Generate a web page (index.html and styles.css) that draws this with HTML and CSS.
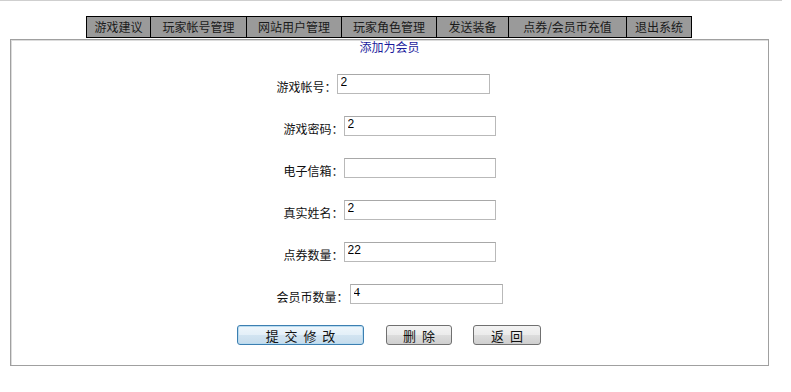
FILE: index.html
```html
<!DOCTYPE html>
<html lang="zh-CN">
<head>
    <meta charset="UTF-8">
    <title>添加为会员</title>
    <link rel="stylesheet" href="styles.css">
</head>
<body>
  <div class="topline"></div>

  <div id="menu">
    <a class="menu-item w1">游戏建议</a>
    <a class="menu-item w2">玩家帐号管理</a>
    <a class="menu-item w3">网站用户管理</a>
    <a class="menu-item w3">玩家角色管理</a>
    <a class="menu-item w4">发送装备</a>
    <a class="menu-item w5">点券/会员币充值</a>
    <a class="menu-item w6">退出系统</a>
  </div>

  <div id="main-box">
    <div class="title">添加为会员</div>

    <form id="member-form">
        <div class="form-row first">
            <label for="account">游戏帐号：</label>
            <input type="text" id="account" value="2">
        </div>
        <div class="form-row">
            <label for="password">游戏密码：</label>
            <input type="text" id="password" value="2">
        </div>
        <div class="form-row">
            <label for="email">电子信箱：</label>
            <input type="text" id="email" value="">
        </div>
        <div class="form-row">
            <label for="realname">真实姓名：</label>
            <input type="text" id="realname" value="2">
        </div>
        <div class="form-row">
            <label for="points">点券数量：</label>
            <input type="text" id="points" value="22">
        </div>
        <div class="form-row">
            <label for="coins">会员币数量：</label>
            <input type="text" id="coins" class="wide serif" value="4">
        </div>

        <div class="btn-row">
            <button type="submit" class="btn btn-main">提 交 修 改</button>
            <button type="button" class="btn btn-del">删 除</button>
            <button type="button" class="btn btn-back">返 回</button>
        </div>
    </form>
  </div>
</body>
</html>
```

FILE: styles.css
```css
body {
  margin: 0;
  padding: 0;
  background-color: #fff;
  font-family: "Liberation Sans", "Noto Sans CJK SC", sans-serif;
  font-size: 12px;
  color: #111;
}

.topline {
  width: 782px;
  height: 1px;
  background-color: #cfcfcf;
}

/* top menu */
#menu {
  display: flex;
  margin: 15px 0 0 86px;
  width: max-content;
  border: 1px solid #000;
  background-color: #9a9a9a;
}

.menu-item {
  display: block;
  height: 20px;
  line-height: 20px;
  text-align: center;
  font-size: 12px;
  color: #1a1a1a;
  font-family: "Noto Sans CJK SC", sans-serif;
  border-left: 1px solid #000;
}

.menu-item:first-child {
  border-left: none;
}

.w1 { width: 63px; }
.w2 { width: 95px; }
.w3 { width: 94px; }
.w4 { width: 71px; }
.w5 { width: 117px; }
.w6 { width: 64px; }

/* content box */
#main-box {
  box-sizing: border-box;
  width: 759px;
  margin: 1px 0 0 10px;
  padding-bottom: 20px;
  border: 1px solid #a0a0a0;
  box-shadow: inset 1px 1px 0 #dcdcdc;
}

.title {
  height: 14px;
  line-height: 14px;
  text-align: center;
  color: #1c1c9c;
  font-family: "Noto Sans CJK SC", sans-serif;
}

.form-row {
  display: flex;
  justify-content: center;
  align-items: center;
  height: 20px;
  margin-top: 22px;
}

.form-row.first {
  margin-top: 20px;
  padding-right: 13px;
}

.form-row label {
  font-family: "Noto Sans CJK SC", sans-serif;
  font-size: 12px;
  line-height: 14px;
  padding-top: 5px;
  color: #111;
}

.form-row input {
  box-sizing: border-box;
  width: 152px;
  height: 20px;
  margin-left: 0;
  padding: 0 3px 4px;
  border: 1px solid #b9b9b9;
  border-top-color: #a8a8a8;
  font-family: "Liberation Sans", sans-serif;
  font-size: 12px;
  color: #000;
  outline: none;
}

.form-row.first input {
  width: 153px;
}

.form-row input.wide {
  width: 153px;
  margin-left: 1px;
}

.form-row input.serif {
  font-family: "Liberation Serif", serif;
  font-size: 13px;
}

/* buttons */
.btn-row {
  display: flex;
  justify-content: center;
  margin-top: 21px;
  padding-right: 1px;
}

.btn {
  box-sizing: border-box;
  height: 20px;
  padding: 0;
  border: 1px solid #707070;
  border-radius: 3px;
  background: linear-gradient(#f3f3f3, #ebebeb 50%, #dddddd 50%, #cfcfcf);
  font-family: "Noto Sans CJK SC", sans-serif;
  font-size: 13px;
  line-height: 17px;
  word-spacing: 3px;
  color: #111;
  cursor: pointer;
}

.btn-main {
  width: 127px;
  border-color: #3c7fb1;
  background: linear-gradient(#eef6fb, #e3eff8 50%, #d2e4f1 50%, #c6dcec);
  box-shadow: inset 0 0 0 1px #b9dbf0;
}

.btn-del {
  width: 66px;
  margin-left: 22px;
}

.btn-back {
  width: 68px;
  margin-left: 21px;
}
```
